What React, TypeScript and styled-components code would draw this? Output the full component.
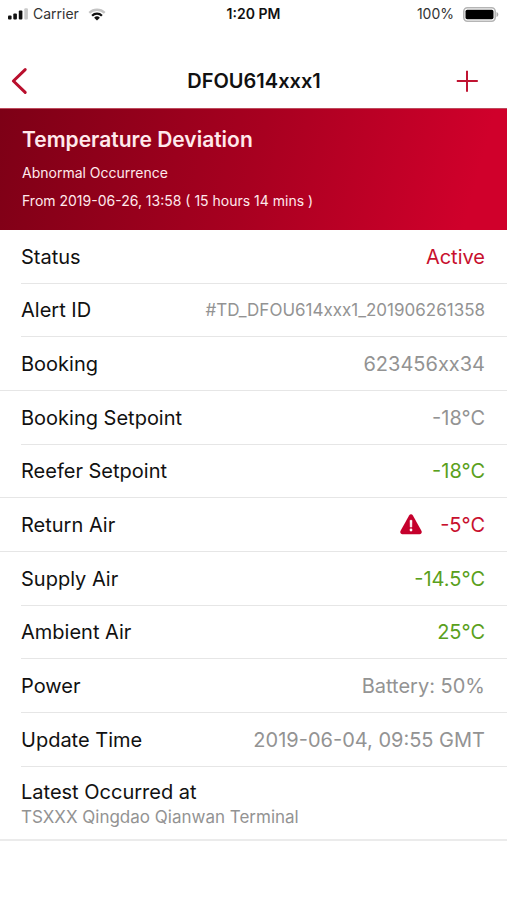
import React from "react";
import styled, { createGlobalStyle } from "styled-components";

const GlobalStyle = createGlobalStyle`
  * { box-sizing: border-box; }
  body {
    margin: 0;
    background: #fff;
    color: #111;
    font-family: Inter, "Liberation Sans", sans-serif;
  }
`;

const Page = styled.div`
  display: flex;
  flex-direction: column;
`;

const StatusBar = styled.div`
  display: grid;
  grid-template-columns: 1fr auto 1fr;
  align-items: center;
  height: 28px;
  padding: 0 8px;
  font-size: 14px;
  line-height: 20px;
  color: #333;
`;

const StatusGroup = styled.div<{ $end?: boolean }>`
  display: flex;
  align-items: center;
  justify-content: ${(p) => (p.$end ? "flex-end" : "flex-start")};
  gap: ${(p) => (p.$end ? 9 : 5)}px;

  svg { display: block; }
`;

const Carrier = styled.span`
  margin-right: 4px;
`;

const Clock = styled.time`
  font-weight: 600;
  color: #111;
`;

const NavBar = styled.header`
  display: grid;
  grid-template-columns: 1fr auto 1fr;
  align-items: center;
  height: 80px;
  padding: 26px 25px 0 8px;
`;

const NavTitle = styled.h1`
  margin: 0;
  padding-left: 18px;
  font-size: 20px;
  font-weight: 600;
  line-height: 26px;
`;

const IconButton = styled.button<{ $end?: boolean }>`
  display: flex;
  justify-self: ${(p) => (p.$end ? "end" : "start")};
  padding: 0;
  border: 0;
  background: none;
  cursor: pointer;
`;

const Banner = styled.section`
  padding: 18px 22px 17px;
  border-top: 1px solid #bd4a5c;
  background: linear-gradient(105deg, #7d0016 0%, #a80020 50%, #d0002b 92%);
  color: #ffe9ec;
`;

const BannerTitle = styled.h2`
  margin: 0 0 8px;
  font-size: 21px;
  font-weight: 600;
  line-height: 26px;
`;

const BannerText = styled.p`
  margin: 0 0 4px;
  font-size: 14px;
  line-height: 24px;

  &:last-child { margin: 0; }
`;

const Details = styled.dl`
  margin: 0;
`;

const Row = styled.div<{ $full?: boolean }>`
  display: flex;
  align-items: center;
  justify-content: space-between;
  min-height: 54px;
  margin-left: ${(p) => (p.$full ? 0 : 21)}px;
  padding-left: ${(p) => (p.$full ? 21 : 0)}px;
  padding-right: 22px;
  border-bottom: 1px solid #e6e6e6;

  &:nth-child(3n + 2) { min-height: 53px; }
`;

const Label = styled.dt`
  font-size: 20px;
  line-height: 26px;
`;

const tones = { muted: "#939393", good: "#5aa01c", bad: "#c8102e" };
type Tone = keyof typeof tones;

const Value = styled.dd<{ $tone: Tone; $small?: boolean }>`
  display: flex;
  align-items: center;
  gap: 18px;
  margin: 0;
  font-size: ${(p) => (p.$small ? 17 : 20)}px;
  line-height: 26px;
  color: ${(p) => tones[p.$tone]};
`;

const Location = styled.div`
  padding: 12px 21px 10px;
  border-bottom: 2px solid #ebebeb;
`;

const Place = styled.dd`
  margin: 0;
  font-size: 17px;
  line-height: 24px;
  color: #939393;
`;

const SignalIcon = () => (
  <svg width="20" height="12" viewBox="0 0 20 12" aria-hidden="true">
    <rect x="0" y="7.5" width="3.6" height="4" rx="1" fill="#111" />
    <rect x="5.3" y="5.5" width="3.6" height="6" rx="1" fill="#111" />
    <rect x="10.8" y="2.5" width="3.6" height="9" rx="1" fill="#111" />
    <rect x="16.3" y="0.2" width="3.6" height="11.3" rx="1" fill="#c9c9c9" />
  </svg>
);

const WifiIcon = () => (
  <svg width="18" height="13" viewBox="0 0 18 13" aria-hidden="true">
    <g fill="none" strokeWidth="2.3">
      <path d="M1.3 4.9a11 11 0 0 1 15.4 0" stroke="#c4c4c4" />
      <path d="M4.1 7.7a7 7 0 0 1 9.8 0" stroke="#111" />
    </g>
    <path d="M6.1 9.7a4.1 4.1 0 0 1 5.8 0L9 12.6z" fill="#111" />
  </svg>
);

const BatteryIcon = () => (
  <svg width="36" height="15" viewBox="0 0 36 15" aria-hidden="true">
    <rect x="0.8" y="0.8" width="31.4" height="13.4" rx="3.6" fill="#fff" stroke="#b5b5b5" strokeWidth="1.6" />
    <rect x="2.5" y="2.8" width="28" height="9.4" rx="1.6" fill="#000" />
    <path d="M33.5 5c2.4.8 2.4 4.2 0 5z" fill="#aaa" />
  </svg>
);

const BackIcon = () => (
  <svg width="22" height="28" viewBox="0 0 22 28" fill="none" aria-hidden="true">
    <path d="M17.2 2.6L5.4 14l11.8 11.4" stroke="#b90f2d" strokeWidth="3" strokeLinecap="round" strokeLinejoin="round" />
  </svg>
);

const PlusIcon = () => (
  <svg width="28" height="28" viewBox="0 0 28 28" fill="none" aria-hidden="true">
    <path d="M13 3.8v21M2.8 14h21" stroke="#c01432" strokeWidth="2" />
  </svg>
);

const AlertIcon = () => (
  <svg width="22" height="21" viewBox="0 0 22 21" aria-label="Alert" role="img">
    <path d="M9.1 1.4c.9-1.5 2.9-1.5 3.8 0l8.5 15.3c.9 1.7 0 3.5-1.8 3.5H2.4c-1.8 0-2.7-1.8-1.8-3.5z" fill="#c5002c" />
    <path d="M10 6.3h2l-.2 6.8h-1.6z" fill="#fff" stroke="#fff" strokeWidth=".5" strokeLinejoin="round" />
    <circle cx="11" cy="16" r="1.4" fill="#fff" />
  </svg>
);

type Item = {
  label: string;
  value: string;
  tone: Tone;
  full?: boolean;
  small?: boolean;
  alert?: boolean;
};

const items: Item[] = [
  { label: "Status", value: "Active", tone: "bad" },
  { label: "Alert ID", value: "#TD_DFOU614xxx1_201906261358", tone: "muted", small: true },
  { label: "Booking", value: "623456xx34", tone: "muted", full: true },
  { label: "Booking Setpoint", value: "-18°C", tone: "muted" },
  { label: "Reefer Setpoint", value: "-18°C", tone: "good", full: true },
  { label: "Return Air", value: "-5°C", tone: "bad", full: true, alert: true },
  { label: "Supply Air", value: "-14.5°C", tone: "good" },
  { label: "Ambient Air", value: "25°C", tone: "good" },
  { label: "Power", value: "Battery: 50%", tone: "muted" },
  { label: "Update Time", value: "2019-06-04, 09:55 GMT", tone: "muted" },
];

export default function App() {
  return (
    <Page>
      <GlobalStyle />
      <StatusBar>
        <StatusGroup>
          <SignalIcon />
          <Carrier>Carrier</Carrier>
          <WifiIcon />
        </StatusGroup>
        <Clock>1:20 PM</Clock>
        <StatusGroup $end>
          <span>100%</span>
          <BatteryIcon />
        </StatusGroup>
      </StatusBar>
      <NavBar>
        <IconButton aria-label="Back">
          <BackIcon />
        </IconButton>
        <NavTitle>DFOU614xxx1</NavTitle>
        <IconButton aria-label="Add" $end>
          <PlusIcon />
        </IconButton>
      </NavBar>
      <main>
        <Banner>
          <BannerTitle>Temperature Deviation</BannerTitle>
          <BannerText>Abnormal Occurrence</BannerText>
          <BannerText>From 2019-06-26, 13:58 ( 15 hours 14 mins )</BannerText>
        </Banner>
        <Details>
          {items.map((item) => (
            <Row key={item.label} $full={item.full}>
              <Label>{item.label}</Label>
              <Value $tone={item.tone} $small={item.small}>
                {item.alert && <AlertIcon />}
                {item.value}
              </Value>
            </Row>
          ))}
          <Location>
            <Label>Latest Occurred at</Label>
            <Place>TSXXX Qingdao Qianwan Terminal</Place>
          </Location>
        </Details>
      </main>
    </Page>
  );
}
